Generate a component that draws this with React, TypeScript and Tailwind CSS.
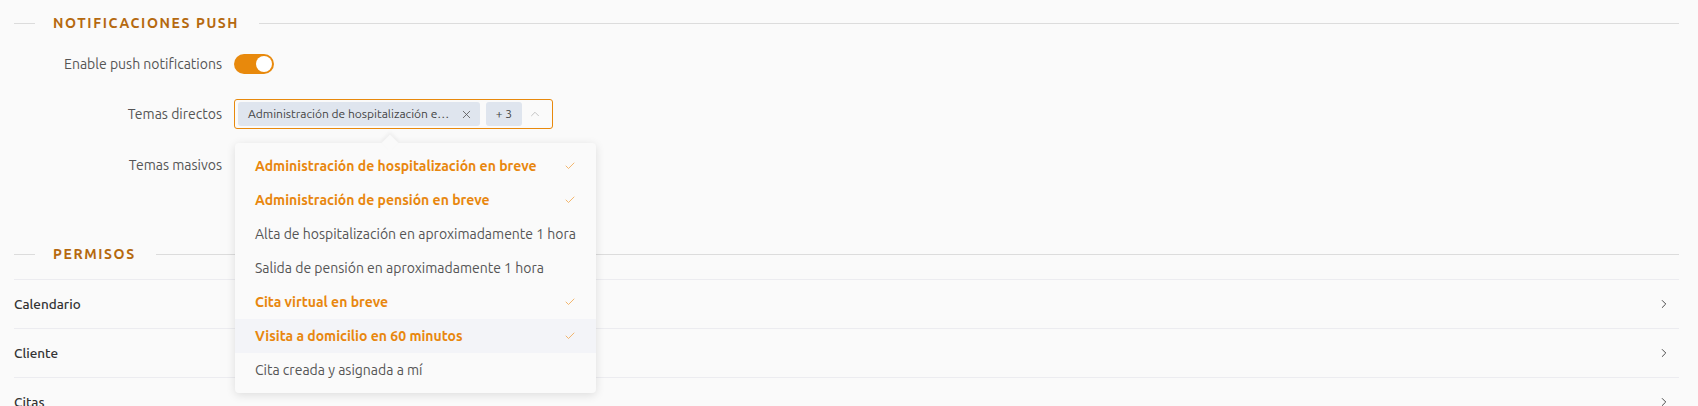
import { X, ChevronUp, ChevronRight, Check } from 'lucide-react';

const font = { fontFamily: '"Ubuntu", "Lato", "Noto Sans", sans-serif' };

const options = [
  { label: 'Administración de hospitalización en breve', selected: true },
  { label: 'Administración de pensión en breve', selected: true },
  { label: 'Alta de hospitalización en aproximadamente 1 hora', selected: false },
  { label: 'Salida de pensión en aproximadamente 1 hora', selected: false },
  { label: 'Cita virtual en breve', selected: true },
  { label: 'Visita a domicilio en 60 minutos', selected: true, hover: true },
  { label: 'Cita creada y asignada a mí', selected: false },
];

function SectionTitle({ title }: { title: string }) {
  return (
    <div className="flex h-[20px] items-center">
      <div className="w-[21px] border-t border-[#dcdcdc]" />
      <span className="pl-[18px] pr-[20px] text-[14px] font-bold tracking-[1.6px] text-[#b5690f]">{title}</span>
      <div className="flex-1 border-t border-[#dcdcdc]" />
    </div>
  );
}

function Row({ label, children }: { label: string; children?: React.ReactNode }) {
  return (
    <div className="flex items-center">
      <div className="w-[208px] whitespace-nowrap text-right text-[14px] leading-[20px] text-[#555]">{label}</div>
      <div className="ml-[12px] flex items-center">{children}</div>
    </div>
  );
}

export default function App() {
  return (
    <div className="min-h-[406px] overflow-hidden bg-[#fafafa] pl-[14px] pr-[19px] pt-[13px]" style={font}>
      <SectionTitle title="NOTIFICACIONES PUSH" />

      <div className="mt-[21px]">
        <Row label="Enable push notifications">
          <div className="flex h-[20px] w-[40px] items-center justify-end rounded-full bg-[#e8890c] px-[2px]">
            <div className="h-[16px] w-[16px] rounded-full bg-white" />
          </div>
        </Row>
      </div>

      <div className="relative mt-[25px]">
        <Row label="Temas directos">
          <div className="flex h-[30px] w-[319px] items-center gap-[6px] rounded-[3px] border border-[#e8890c] px-[3px]">
            <span className="flex h-[24px] w-[242px] items-center justify-between whitespace-nowrap rounded-[3px] bg-[#dfe5ee] pl-[10px] pr-[7px] text-[12px] text-[#444]">
              Administración de hospitalización e…
              <X className="h-[13px] w-[13px] text-[#555]" strokeWidth={1.5} />
            </span>
            <span className="flex h-[24px] w-[36px] items-center justify-center rounded-[3px] bg-[#dfe5ee] text-[12px] text-[#444]">
              + 3
            </span>
            <ChevronUp className="h-[14px] w-[14px] text-[#bbb]" strokeWidth={1.5} />
          </div>
        </Row>

        <div className="absolute left-[221px] top-[44px] z-10 w-[361px] rounded-[4px] bg-[#fafafa] py-[6px] shadow-[0_2px_10px_rgba(0,0,0,0.12)]">
          <div className="absolute -top-[6px] left-[149px] h-[12px] w-[12px] rotate-45 bg-[#fafafa] shadow-[-2px_-2px_4px_rgba(0,0,0,0.05)]" />
          {options.map((o) => (
            <div
              key={o.label}
              className={`relative flex h-[34px] items-center justify-between whitespace-nowrap pl-[20px] pr-[20px] text-[14px] ${
                o.hover ? 'bg-[#f3f4f8]' : ''
              } ${o.selected ? 'font-bold text-[#e8870e]' : 'text-[#555]'}`}
            >
              <span>{o.label}</span>
              {o.selected && <Check className="h-[12px] w-[12px] text-[#f0a040]" strokeWidth={1.5} />}
            </div>
          ))}
        </div>
      </div>

      <div className="mt-[26px]">
        <Row label="Temas masivos" />
      </div>

      <div className="mt-[69px]">
        <SectionTitle title="PERMISOS" />
      </div>

      <div className="mt-[15px]">
        {['Calendario', 'Cliente', 'Citas'].map((name) => (
          <div key={name} className="flex h-[49px] items-center justify-between border-t border-[#ececf0] pr-[8px]">
            <span className="text-[13.5px] font-medium text-[#333]">{name}</span>
            <ChevronRight className="h-[14px] w-[14px] text-[#333]" strokeWidth={1.5} />
          </div>
        ))}
      </div>
    </div>
  );
}
